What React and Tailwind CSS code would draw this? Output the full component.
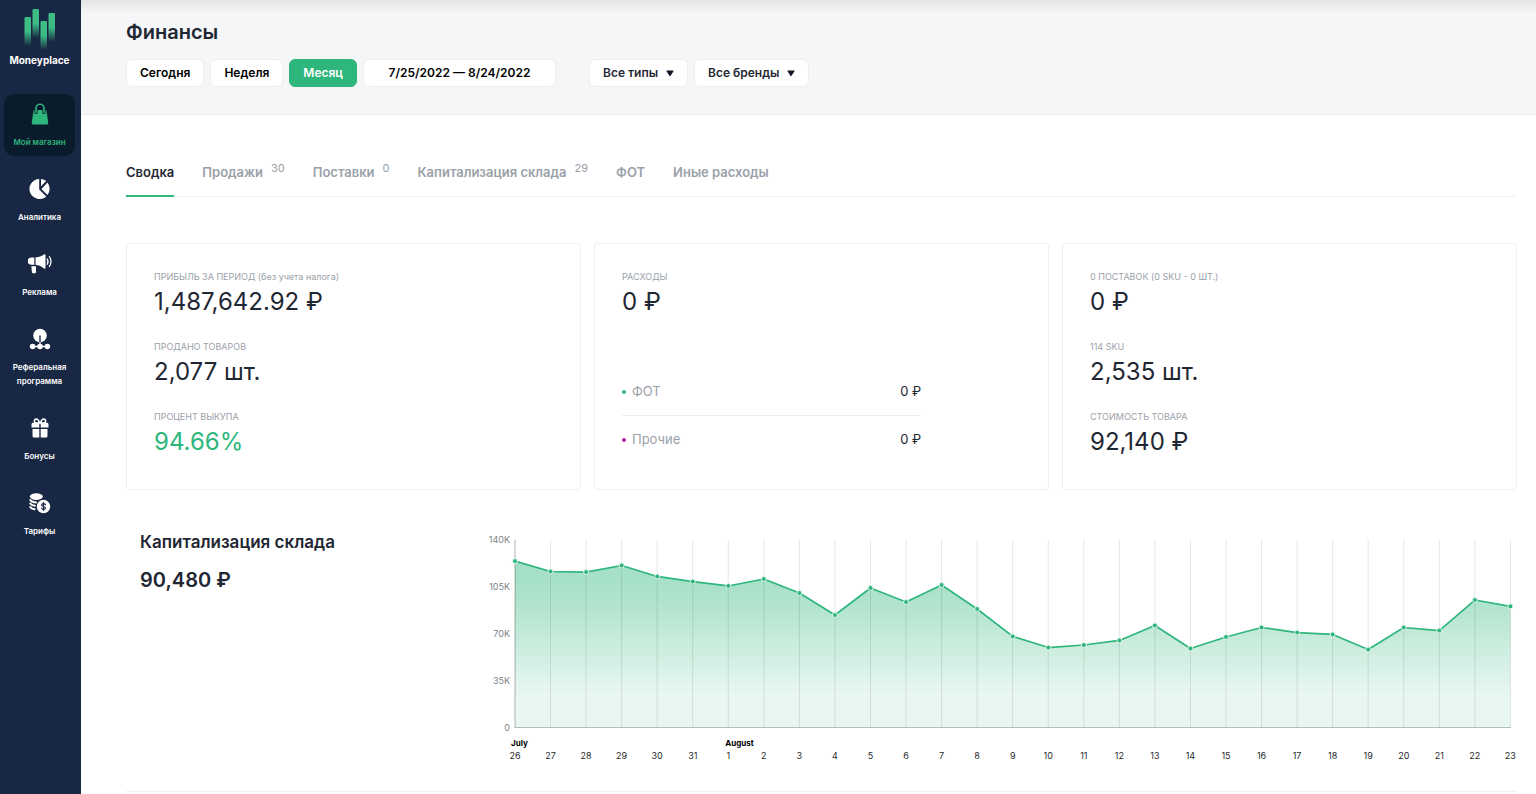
import React from 'react';

const BagIcon = () => (
  <svg width="24" height="24" viewBox="0 0 24 24" fill="none">
    <path d="M5.400 8.200c.1-.7.6-1.200 1.300-1.200h10.600c.7 0 1.200.5 1.300 1.200l1.700 11.900c.1.800-.5 1.400-1.300 1.400H5c-.800 0-1.400-.6-1.300-1.400z" fill="currentColor" />
    <path d="M8 9.500V5.200a4 4 0 0 1 8 0v4.300" stroke="#0a1b2c" strokeWidth="3.200" strokeLinecap="round" />
    <path d="M8 9.500V5.200a4 4 0 0 1 8 0v4.300" stroke="currentColor" strokeWidth="1.600" strokeLinecap="round" />
  </svg>
);

const PieIcon = () => (
  <svg width="24" height="24" viewBox="0 0 24 24" fill="currentColor">
    <path d="M11.200 1v10.400l7 7A10 10 0 1 1 11.200 1z" />
    <path d="M13 1c2 .2 3.700.9 5.200 2L13 8.200z" />
    <path d="M19.500 4.400A10 10 0 0 1 19.400 17l-5.900-6z" />
  </svg>
);

const MegaphoneIcon = () => (
  <svg width="24" height="24" viewBox="0 0 24 24" fill="none">
    <path d="M3.300 4.500h3v7.300h-3a3.650 3.650 0 0 1 0-7.300z" fill="currentColor" />
    <path d="M7.500 4.500c3.400-.2 6.400-1.300 8.500-2.900.8-.6 1.500-.2 1.500.6v12.600c0 .8-.7 1.200-1.500.600-2-1.600-5.100-3.300-8.500-3.600z" fill="currentColor" />
    <path d="M3.300 13.200h4.700v6c0 .600-.400 1-1 1H5c-.5 0-.9-.3-1-.8z" fill="currentColor" />
    <path d="M19.200 6c1 1.500 1 3.700 0 5.200M21.400 3.800c2.100 2.700 2.100 6.900 0 9.600" stroke="currentColor" strokeWidth="1.300" strokeLinecap="round" />
  </svg>
);

const ReferralIcon = () => (
  <svg width="24" height="24" viewBox="0 0 24 24" fill="none">
    <circle cx="12" cy="7.500" r="6.800" fill="currentColor" />
    <path d="M12 7.500v8" stroke="#182743" strokeWidth="1.400" />
    <path d="M12 14v4.500M4.600 18.500h14.800" stroke="currentColor" strokeWidth="1.300" />
    <circle cx="4.600" cy="18.500" r="2.800" fill="currentColor" />
    <circle cx="12" cy="18.500" r="2.800" fill="currentColor" />
    <circle cx="19.400" cy="18.500" r="2.800" fill="currentColor" />
  </svg>
);

const GiftIcon = () => (
  <svg width="24" height="24" viewBox="0 0 24 24" fill="none">
    <path d="M11.500 6C10.800 3.300 9.600 2 8.300 2a1.900 1.900 0 0 0-1.900 2c0 1 .8 2 2 2zM12.500 6c.7-2.700 1.900-4 3.200-4a1.900 1.900 0 0 1 1.900 2c0 1-.8 2-2 2z" stroke="currentColor" strokeWidth="1.600" strokeLinejoin="round" />
    <path d="M5 5.800h6.300v4.700H3.500V7.300c0-.8.700-1.500 1.500-1.500zM12.700 5.800H19c.8 0 1.500.7 1.500 1.500v3.200h-7.800z" fill="currentColor" />
    <path d="M4.500 12h6.800v8.500H6c-.8 0-1.500-.7-1.500-1.500zM12.700 12h6.800v7c0 .8-.7 1.500-1.500 1.500h-5.300z" fill="currentColor" />
  </svg>
);

const CoinsIcon = () => (
  <svg width="24" height="24" viewBox="0 0 24 24" fill="none">
    <ellipse cx="8.300" cy="4.600" rx="6.500" ry="3.400" fill="currentColor" />
    <path d="M2.300 8c1 1.700 3.400 2.300 6 2.400M2.300 11.500c.8 1.400 2.500 2 4.500 2.200M2.300 15c.8 1.400 2.500 2 4.300 2.200" stroke="currentColor" strokeWidth="2" strokeLinecap="round" />
    <circle cx="15.500" cy="14.500" r="7.700" fill="#182743" />
    <circle cx="15.500" cy="14.500" r="6.700" fill="currentColor" />
    <path d="M17.400 12.800c-.3-.7-1-1.100-1.900-1.100-1.100 0-1.900.5-1.900 1.400 0 2 3.800.8 3.800 2.800 0 .9-.8 1.400-1.900 1.400-1 0-1.700-.4-2-1.200M15.500 10.500v8" stroke="#182743" strokeWidth="1.200" strokeLinecap="round" />
  </svg>
);

const Logo = () => (
  <svg width="32" height="42" viewBox="0 0 32 42">
    <defs>
      <linearGradient id="bar" x1="0" y1="0" x2="0" y2="1">
        <stop offset="0.500" stopColor="#3dbd84" />
        <stop offset="1" stopColor="#3dbd84" stopOpacity="0" />
      </linearGradient>
    </defs>
    <rect x="0.500" y="9" width="6.500" height="29" rx="1" fill="url(#bar)" />
    <rect x="8.500" y="1" width="6.500" height="29" rx="1" fill="url(#bar)" />
    <rect x="16.500" y="13" width="6.500" height="29" rx="1" fill="url(#bar)" />
    <rect x="24.500" y="5" width="6.500" height="29" rx="1" fill="url(#bar)" />
  </svg>
);

const NAV = [
  { label: 'Мой магазин', icon: BagIcon, active: true },
  { label: 'Аналитика', icon: PieIcon },
  { label: 'Реклама', icon: MegaphoneIcon },
  { label: 'Реферальная программа', icon: ReferralIcon },
  { label: 'Бонусы', icon: GiftIcon },
  { label: 'Тарифы', icon: CoinsIcon },
];

const TABS = [
  { label: 'Сводка', active: true },
  { label: 'Продажи', count: 30 },
  { label: 'Поставки', count: 0 },
  { label: 'Капитализация склада', count: 29 },
  { label: 'ФОТ' },
  { label: 'Иные расходы' },
];

// stock value per day, thousands of roubles
const STOCK = [
  124.3, 116.5, 116.1, 121, 112.8, 109, 105.7, 110.9, 100.4, 84, 104.2, 93.7, 106.4, 88.5, 68,
  59.7, 61.6, 65, 76.2, 59, 67.6, 74.7, 70.9, 69.5, 58.2, 74.7, 72.4, 95.2, 90.48,
];
const dayOf = (i) => (i < 6 ? 26 + i : i - 5);

const Sidebar = () => (
  <aside className="flex w-[81px] shrink-0 flex-col bg-[#182743] pt-2 pr-[6px] pl-1 text-white">
    <a href="#" className="mb-[26px] flex flex-col items-center">
      <Logo />
      <span className="mt-[2px] text-[10px] leading-4 font-bold">Moneyplace</span>
    </a>
    <nav className="flex flex-col gap-[13px]">
      {NAV.map(({ label, icon: Icon, active }) => (
        <a
          key={label}
          href="#"
          className={`flex flex-col items-center gap-2 rounded-[10px] px-1 pt-[9px] pb-[7px] text-center text-[8px] leading-[14px] font-semibold ${active ? 'bg-[#0a1b2c] text-[#2eb67d]' : ''}`}
        >
          <Icon />
          {label}
        </a>
      ))}
    </nav>
  </aside>
);

const FilterButton = ({ active, children }) => (
  <button className={`h-7 rounded-md border px-[13px] text-[12px] font-semibold ${active ? 'border-[#2eb67d] bg-[#2eb67d] text-white' : 'border-[#eceef0] bg-white text-black'}`}>
    {children}
  </button>
);

const FilterSelect = ({ label }) => (
  <div className="relative">
    <select aria-label={label} className="h-7 appearance-none rounded-md border border-[#eceef0] bg-white pr-7 pl-[13px] text-[12px] font-semibold text-[#1f2733]">
      <option>{label}</option>
    </select>
    <svg className="pointer-events-none absolute top-[11px] right-[14px]" width="8" height="7" viewBox="0 0 8 7">
      <path d="M1 1h6L4 5.500z" fill="#0f1823" stroke="#0f1823" strokeWidth="1.200" strokeLinejoin="round" />
    </svg>
  </div>
);

const Stat = ({ label, value, green }) => (
  <div>
    <div className="text-[9px] leading-3 text-[#9aa1a9]">{label}</div>
    <div className={`mt-1 text-2xl leading-[30px] ${green ? 'text-[#2eb67d]' : 'text-[#1f2733]'}`}>{value}</div>
  </div>
);

const Card = ({ children }) => (
  <div className="flex flex-col gap-6 rounded-[3px] border border-[#eff0f1] px-[27px] pt-[27px] pb-[25px]">{children}</div>
);

const Expense = ({ label, dot, value }) => (
  <div className="flex h-12 items-center text-[13px] text-[#1f2733]">
    <span className={`mr-[6px] size-1 rounded-full ${dot}`} />
    <span className="text-[#9aa1a9]">{label}</span>
    <span className="ml-auto">{value}</span>
  </div>
);

const StockChart = () => {
  const x = (i) => 27 + i * 35.55;
  const y = (v) => 193.5 - v * 1.339;
  const line = STOCK.map((v, i) => `${x(i)},${y(v)}`).join(' ');
  const last = x(STOCK.length - 1);

  return (
    <svg viewBox="0 0 1029 230" className="h-auto w-full overflow-visible">
      <defs>
        <linearGradient id="area" x1="0" y1="0" x2="0" y2="1">
          <stop offset="0" stopColor="#2eb67d" stopOpacity="0.450" />
          <stop offset="0.250" stopColor="#2eb67d" stopOpacity="0.380" />
          <stop offset="0.800" stopColor="#2eb67d" stopOpacity="0.110" />
          <stop offset="1" stopColor="#2eb67d" stopOpacity="0.110" />
        </linearGradient>
      </defs>
      <polygon points={`27,193.500 ${line} ${last},193.500`} fill="url(#area)" />
      {STOCK.map((v, i) => (
        <line key={i} x1={x(i)} x2={x(i)} y1="6" y2="193.500" stroke="#000" strokeOpacity={i ? 0.1 : 0.3} />
      ))}
      <line x1="26.500" x2={last + 0.5} y1="193.500" y2="193.500" stroke="#b4bcc0" />
      <polyline points={line} fill="none" stroke="#2eb67d" strokeWidth="1.700" strokeLinejoin="round" />
      {STOCK.map((v, i) => (
        <circle key={i} cx={x(i)} cy={y(v)} r="2.500" fill="#2eb67d" stroke="#e6f6ee" strokeWidth="1" />
      ))}
      <g fontSize="9" fill="#7d8287" textAnchor="end">
        {['140K', '105K', '70K', '35K', '0'].map((t, i) => (
          <text key={t} x="22" y={9 + i * 46.9}>{t}</text>
        ))}
      </g>
      <g fontSize="8" fontWeight="700">
        <text x="23" y="212">July</text>
        <text x={x(6) - 3} y="212">August</text>
      </g>
      <g fontSize="9" fill="#26292c" textAnchor="middle">
        {STOCK.map((v, i) => (
          <text key={i} x={x(i)} y="225">{dayOf(i)}</text>
        ))}
      </g>
    </svg>
  );
};

export default function App() {
  return (
    <div className="flex min-h-screen bg-white font-['Inter',sans-serif] text-[#1f2733]">
      <Sidebar />
      <main className="min-w-0 flex-1">
        <header className="border-b border-[#e9ebed] bg-[#f5f6f8] bg-[linear-gradient(to_bottom,#e2e4e6,#f5f6f8_14px)] pt-5 pr-[19px] pb-[27px] pl-[45px]">
          <h1 className="text-xl leading-6 font-semibold">Финансы</h1>
          <div className="mt-[15px] flex flex-wrap items-center gap-[6px]">
            <FilterButton>Сегодня</FilterButton>
            <FilterButton>Неделя</FilterButton>
            <FilterButton active>Месяц</FilterButton>
            <input
              aria-label="Период"
              defaultValue="7/25/2022 — 8/24/2022"
              className="mr-[27px] h-7 w-[193px] rounded-md border border-[#eceef0] bg-white pb-px text-center text-[12px] font-semibold text-black"
            />
            <FilterSelect label="Все типы" />
            <FilterSelect label="Все бренды" />
          </div>
        </header>

        <div className="pt-[46px] pr-[19px] pl-[45px]">
          <div className="flex gap-7 border-b border-[#f0f1f2]">
            {TABS.map(({ label, count, active }) => (
              <button
                key={label}
                className={`-mb-px flex border-b-2 pb-3 text-[13px] leading-[22px] font-semibold ${active ? 'border-[#2eb67d] text-[#1f2733]' : 'border-transparent text-[#9aa1a9]'}`}
              >
                {label}
                {count !== undefined && <span className="ml-2 text-[11px] leading-[14px] font-normal">{count}</span>}
              </button>
            ))}
          </div>

          <div className="mt-[46px] grid grid-cols-3 gap-[13px]">
            <Card>
              <Stat label="ПРИБЫЛЬ ЗА ПЕРИОД (без учета налога)" value="1,487,642.92 ₽" />
              <Stat label="ПРОДАНО ТОВАРОВ" value="2,077 шт." />
              <Stat label="ПРОЦЕНТ ВЫКУПА" value="94.66%" green />
            </Card>
            <Card>
              <Stat label="РАСХОДЫ" value="0 ₽" />
              <div className="mt-[27px] w-3/4 divide-y divide-[#eceef0]">
                <Expense label="ФОТ" dot="bg-[#2eb67d]" value="0 ₽" />
                <Expense label="Прочие" dot="bg-[#c020a0]" value="0 ₽" />
              </div>
            </Card>
            <Card>
              <Stat label="0 ПОСТАВОК (0 SKU - 0 ШТ.)" value="0 ₽" />
              <Stat label="114 SKU" value="2,535 шт." />
              <Stat label="СТОИМОСТЬ ТОВАРА" value="92,140 ₽" />
            </Card>
          </div>

          <section className="mt-10 flex border-b border-[#f0f1f2] pb-[27px]">
            <div className="w-[362px] shrink-0 pl-[14px] font-semibold">
              <h2 className="text-[17px] leading-6">Капитализация склада</h2>
              <div className="mt-3 text-xl leading-7">90,480 ₽</div>
            </div>
            <div className="min-w-0 flex-1 pt-1">
              <StockChart />
            </div>
          </section>
        </div>
      </main>
    </div>
  );
}
